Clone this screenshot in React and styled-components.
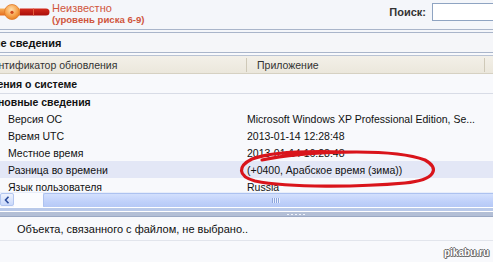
import React from "react";
import styled, { createGlobalStyle } from "styled-components";

const Global = createGlobalStyle`
  html, body { margin: 0; padding: 0; }
  body { width: 493px; height: 262px; overflow: hidden; background: #f7f8fb; font-family: "Liberation Sans", Arial, sans-serif; }
  #root { width: 493px; height: 262px; }
`;

const Page = styled.div`
  position: relative;
  width: 493px;
  height: 262px;
  overflow: hidden;
  display: flex;
  flex-direction: column;
  background: #f7f8fb;
`;

const Toolbar = styled.div`
  height: 29px;
  flex: none;
  display: flex;
  align-items: flex-start;
  justify-content: space-between;
  background: #f4f6fa;
  border-bottom: 1px solid #a9b5ca;
`;

const Risk = styled.div`
  display: flex;
  align-items: flex-start;
  gap: 2px;
  padding-top: 2px;
`;

const RiskText = styled.div`
  display: flex;
  flex-direction: column;
  color: #d0553c;
  line-height: 12px;
`;

const RiskTitle = styled.span`
  font-size: 11px;
`;

const RiskSub = styled.span`
  font-size: 9.6px;
  font-weight: bold;
`;

const Search = styled.div`
  display: flex;
  align-items: center;
  gap: 6px;
  padding-top: 3px;
`;

const SearchLabel = styled.span`
  font-size: 11px;
  font-weight: bold;
  color: #333;
`;

const SearchInput = styled.div`
  width: 61px;
  height: 18px;
  box-sizing: border-box;
  background: #fff;
  border: 1px solid #8fa4c2;
  border-right: none;
`;

const Gap = styled.div`
  height: 2px;
  flex: none;
  background: #f4f6fa;
  border-bottom: 1px solid #a9b5ca;
`;

const SectionBar = styled.div`
  height: 19px;
  flex: none;
  display: flex;
  align-items: center;
  overflow: hidden;
  white-space: nowrap;
  font-size: 11px;
  font-weight: bold;
  color: #111;
  background: #f5f6f9;
  border-bottom: 1px solid #a9b5ca;
`;

const Shift = styled.span`
  margin-left: ${(p) => p.$x}px;
`;

const Viewport = styled.div`
  height: 139px;
  flex: none;
  overflow: hidden;
  padding-top: 2px;
  box-sizing: border-box;
  background: #f8f9fc;
`;

const HeaderRow = styled.div`
  height: 17px;
  display: flex;
  align-items: center;
  white-space: nowrap;
  overflow: hidden;
  font-size: 10.5px;
  color: #333;
  background: linear-gradient(#f3f0e8, #ebe7dc);
  border-top: 1px solid #b9c3d4;
  border-bottom: 1px solid #d6d1c2;
`;

const HeaderCell = styled.div`
  width: ${(p) => p.$w}px;
  flex: none;
  height: 14px;
  display: flex;
  align-items: center;
  overflow: hidden;
  padding-left: ${(p) => p.$pad || 0}px;
  box-sizing: border-box;
  border-right: 1px solid #cfc9b8;
`;

const GroupRow = styled.div`
  height: ${(p) => p.$h}px;
  display: flex;
  align-items: center;
  white-space: nowrap;
  overflow: hidden;
  font-size: 10.5px;
  font-weight: bold;
  color: #111;
  border-bottom: ${(p) => (p.$line ? "1px solid #d8dce6" : "none")};
`;

const DataRow = styled.div`
  height: 17px;
  display: flex;
  align-items: center;
  white-space: nowrap;
  font-size: 10.5px;
  color: #111;
  background: ${(p) => (p.$active ? "#e3e7f6" : "transparent")};
`;

const NameCell = styled.div`
  width: 247px;
  flex: none;
  padding-left: 8px;
  box-sizing: border-box;
`;

const ValueCell = styled.div`
  flex: 1;
  overflow: hidden;
`;

const HScroll = styled.div`
  height: 14px;
  flex: none;
  display: flex;
  background: #f2f5fd;
  border-top: 1px solid #e8eefa;
`;

const ScrollButton = styled.div`
  width: 14px;
  height: 13px;
  box-sizing: border-box;
  display: flex;
  align-items: center;
  justify-content: center;
  background: linear-gradient(#eef3fe, #c9d8fb);
  border: 1px solid #b3c6f0;
  border-radius: 2px;
`;

const Track = styled.div`
  width: 29px;
  flex: none;
  background: #fbfcff;
`;

const Thumb = styled.div`
  flex: 1;
  height: 13px;
  display: flex;
  align-items: center;
  padding-left: 228px;
  background: linear-gradient(#d3e0fd, #bfd0fa 60%, #b6c9f6);
  border: 1px solid #adc2f0;
  border-right: none;
  border-radius: 2px 0 0 2px;
`;

const Grip = styled.div`
  width: 8px;
  height: 5px;
  background: repeating-linear-gradient(90deg, #8ea6dc 0 1px, #e8efff 1px 2px);
`;

const Splitter = styled.div`
  height: 10px;
  flex: none;
  display: flex;
  flex-direction: column;
  background: #fff;
`;

const SplitTop = styled.div`
  height: 3px;
  margin-top: 1px;
  background: #b9c9e9;
`;

const SplitBand = styled.div`
  height: 4px;
  margin-top: 1px;
  display: flex;
  align-items: center;
  padding-left: 287px;
  background: #b3bfd6;
  border-bottom: 1px solid #9aa8c4;
`;

const Dashes = styled.div`
  width: 20px;
  height: 1px;
  background: repeating-linear-gradient(90deg, #f0f3fa 0 2px, transparent 2px 4px);
`;

const InfoBar = styled.div`
  height: 23px;
  flex: none;
  display: flex;
  align-items: center;
  padding-left: 17px;
  font-size: 11px;
  color: #111;
  background: #f8f9fc;
  border-bottom: 1px solid #e2e5ec;
`;

const Footer = styled.div`
  flex: 1;
  display: flex;
  justify-content: flex-end;
  align-items: flex-start;
  padding: 6px 4px 0 0;
  background: #f8f9fc;
`;

const Watermark = styled.span`
  font-family: "Liberation Sans", Arial, sans-serif;
  font-size: 10px;
  font-weight: bold;
  color: #fff;
  text-shadow: -1px 0 #6a6a6a, 1px 0 #6a6a6a, 0 -1px #6a6a6a, 0 1px #6a6a6a, 1px 1px #8a8a8a;
`;

const Scribble = styled.svg`
  position: absolute;
  left: 0;
  top: 0;
  pointer-events: none;
`;

function RiskSlider() {
  return (
    <svg width="50" height="24" viewBox="0 0 50 24">
      <defs>
        <linearGradient id="ob" x1="0" y1="0" x2="0" y2="1">
          <stop offset="0" stopColor="#f7b15c" />
          <stop offset="1" stopColor="#e46a1c" />
        </linearGradient>
        <linearGradient id="rb" x1="0" y1="0" x2="0" y2="1">
          <stop offset="0" stopColor="#d42a1c" />
          <stop offset="1" stopColor="#a80d0a" />
        </linearGradient>
        <radialGradient id="kn" cx="0.45" cy="0.35" r="0.7">
          <stop offset="0" stopColor="#fde0b0" />
          <stop offset="0.6" stopColor="#f7a24a" />
          <stop offset="1" stopColor="#e37618" />
        </radialGradient>
      </defs>
      <rect x="0" y="6.5" width="20" height="7" fill="url(#ob)" />
      <path d="M20 6.5 H46 a3.5 3.5 0 0 1 0 7 H20 Z" fill="url(#rb)" />
      <rect x="33" y="6.5" width="1" height="7" fill="#e35a3a" />
      <circle cx="12" cy="10" r="7.5" fill="url(#kn)" stroke="#e07a2a" strokeWidth="0.8" />
      <circle cx="12" cy="10.3" r="1.6" fill="#d0461a" />
    </svg>
  );
}

const rows = [
  { name: "Версия ОС", value: "Microsoft Windows XP Professional Edition, Se..." },
  { name: "Время UTC", value: "2013-01-14 12:28:48" },
  { name: "Местное время", value: "2013-01-14 16:28:48" },
  { name: "Разница во времени", value: "(+0400, Арабское время (зима))", active: true },
  { name: "Язык пользователя", value: "Russia" },
];

export default function App() {
  return (
    <>
      <Global />
      <Page>
        <Toolbar>
          <Risk>
            <RiskSlider />
            <RiskText>
              <RiskTitle>Неизвестно</RiskTitle>
              <RiskSub>(уровень риска 6-9)</RiskSub>
            </RiskText>
          </Risk>
          <Search>
            <SearchLabel>Поиск:</SearchLabel>
            <SearchInput />
          </Search>
        </Toolbar>
        <Gap />
        <SectionBar>
          <Shift $x={-31}>Общие сведения</Shift>
        </SectionBar>
        <Viewport>
          <HeaderRow>
            <HeaderCell $w={247}>
              <Shift $x={-21}>Идентификатор обновления</Shift>
            </HeaderCell>
            <HeaderCell $w={238} $pad={10}>Приложение</HeaderCell>
          </HeaderRow>
          <GroupRow $h={19} $line>
            <Shift $x={-29}>Сведения о системе</Shift>
          </GroupRow>
          <GroupRow $h={16}>
            <Shift $x={-16}>Основные сведения</Shift>
          </GroupRow>
          {rows.map((r) => (
            <DataRow key={r.name} $active={r.active}>
              <NameCell>{r.name}</NameCell>
              <ValueCell>{r.value}</ValueCell>
            </DataRow>
          ))}
        </Viewport>
        <HScroll>
          <ScrollButton>
            <svg width="6" height="8" viewBox="0 0 6 8">
              <path d="M4.5 0.8 L1.5 4 L4.5 7.2" fill="none" stroke="#2a4a9a" strokeWidth="1.6" />
            </svg>
          </ScrollButton>
          <Track />
          <Thumb>
            <Grip />
          </Thumb>
        </HScroll>
        <Splitter>
          <SplitTop />
          <SplitBand>
            <Dashes />
          </SplitBand>
        </Splitter>
        <InfoBar>Объекта, связанного с файлом, не выбрано..</InfoBar>
        <Footer>
          <Watermark>pikabu.ru</Watermark>
        </Footer>
        <Scribble width="493" height="262" viewBox="0 0 493 262">
          <path
            d="M262 160 C300 152 390 147 425 160 C440 168 436 180 405 183 C360 187 290 188 255 181 C237 176 238 166 252 159 C272 151 315 151 345 152"
            fill="none"
            stroke="#d9141b"
            strokeWidth="3.2"
            strokeLinecap="round"
          />
        </Scribble>
      </Page>
    </>
  );
}
